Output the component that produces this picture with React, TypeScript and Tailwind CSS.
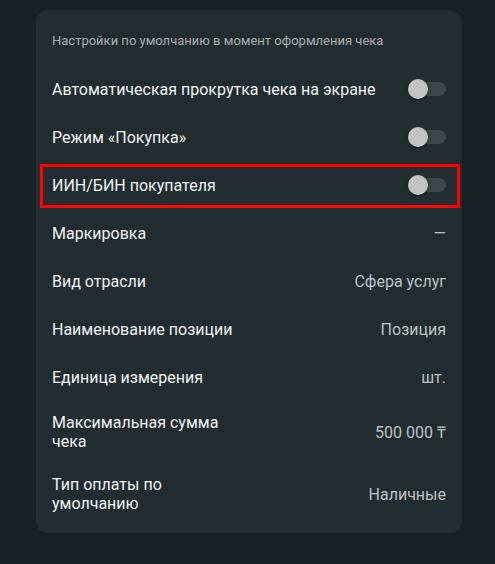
import type { ReactNode } from 'react';

type Row =
  | { label: string; kind: 'toggle'; highlighted?: boolean }
  | { label: ReactNode; kind: 'value'; value: string };

const ROWS: Row[] = [
  { label: 'Автоматическая прокрутка чека на экране', kind: 'toggle' },
  { label: 'Режим «Покупка»', kind: 'toggle' },
  { label: 'ИИН/БИН покупателя', kind: 'toggle', highlighted: true },
  { label: 'Маркировка', kind: 'value', value: '—' },
  { label: 'Вид отрасли', kind: 'value', value: 'Сфера услуг' },
  { label: 'Наименование позиции', kind: 'value', value: 'Позиция' },
  { label: 'Единица измерения', kind: 'value', value: 'шт.' },
  { label: 'Максимальная сумма чека', kind: 'value', value: '500 000 ₸' },
  { label: 'Тип оплаты по умолчанию', kind: 'value', value: 'Наличные' },
];

function Switch() {
  return (
    <div className="relative w-[38px] h-5 flex items-center">
      <div className="absolute left-[3px] right-0 h-[14px] rounded-full bg-[#3b4749]" />
      <div className="absolute left-0 w-5 h-5 rounded-full bg-[#c4c4c4] shadow-[0_1px_3px_rgba(0,0,0,0.45)]" />
    </div>
  );
}

export default function App() {
  return (
    <div className="min-h-[564px] bg-[#172123] pt-[10px] font-['Roboto',sans-serif]">
      <section className="ml-[36px] w-[426px] rounded-[12px] bg-[#212d31] px-4 pt-[23px] pb-2">
        <h2 className="text-[13px] leading-4 text-[#a8afb2] mb-4">Настройки по умолчанию в момент оформления чека</h2>
        <div>
          {ROWS.map((row, index) => (
            <div key={index} className="relative flex items-center justify-between gap-4 py-3 min-h-12">
              <span className={`text-[16px] leading-[19px] text-[#f1f3f4] ${row.kind === 'value' ? 'max-w-[190px]' : ''}`}>
                {row.label}
              </span>
              {row.kind === 'toggle' ? (
                <Switch />
              ) : (
                <span className="text-[16px] leading-[19px] text-[#bcc3c6] text-right whitespace-nowrap">{row.value}</span>
              )}
              {row.kind === 'toggle' && row.highlighted && (
                <div className="absolute top-[3px] bottom-[1px] -left-3 -right-[14px] border-[3px] border-[#ff0000] pointer-events-none" />
              )}
            </div>
          ))}
        </div>
      </section>
    </div>
  );
}
